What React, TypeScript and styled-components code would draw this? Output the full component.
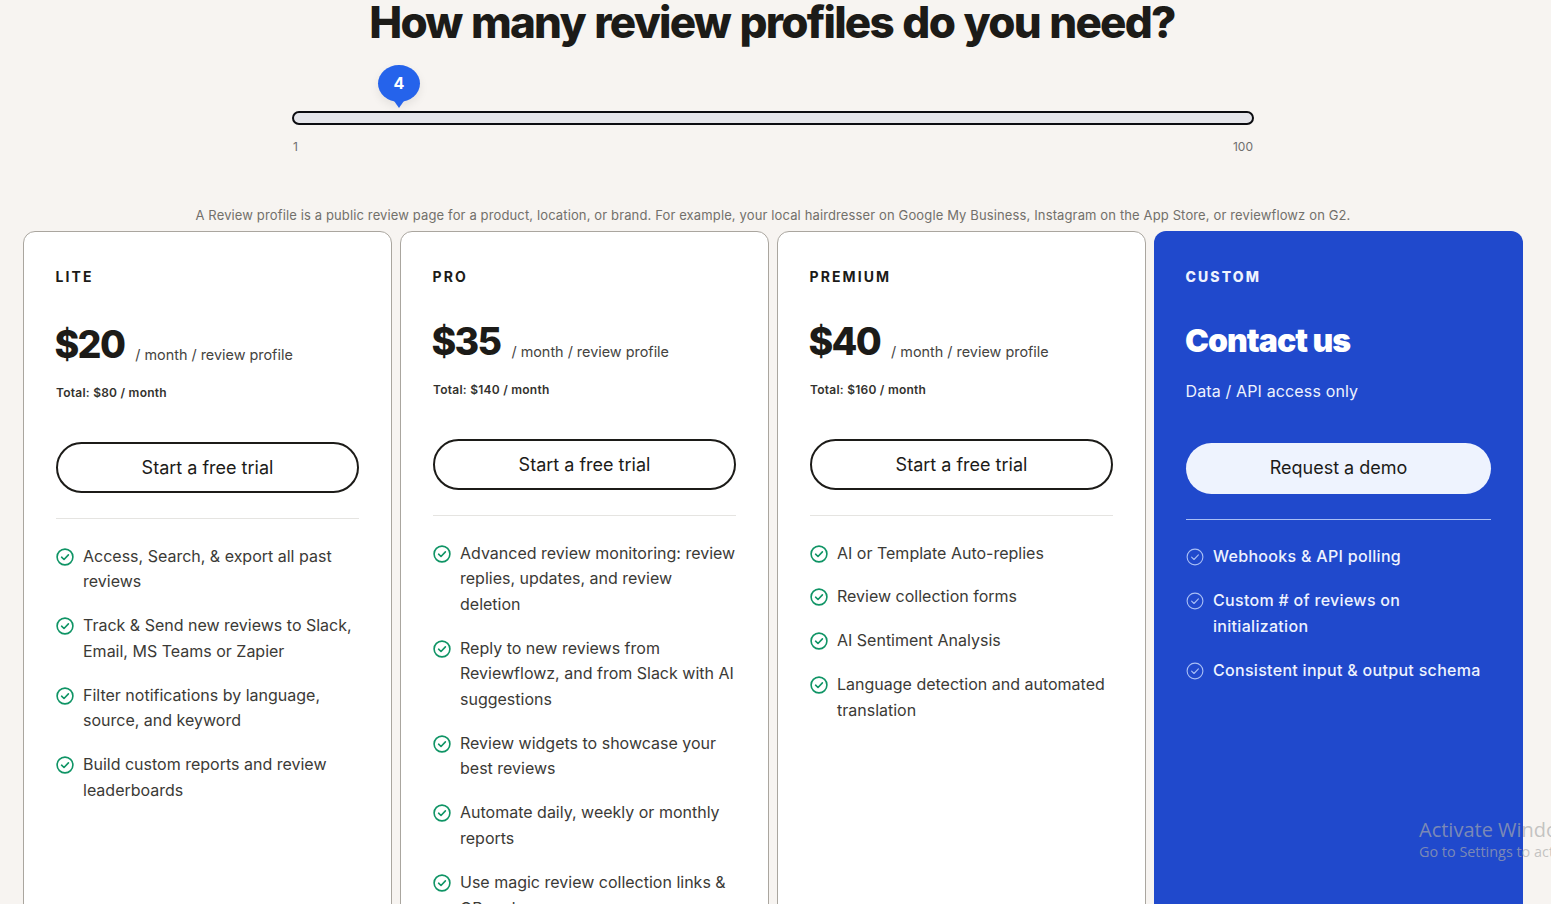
import styled, { createGlobalStyle } from "styled-components";

const GlobalStyle = createGlobalStyle`
  html, body {
    margin: 0;
    padding: 0;
    height: 904px;
    overflow: hidden;
    background: #f7f4f1;
    font-family: Inter, "Noto Sans", sans-serif;
    color: #1c1b18;
  }
`;

interface Plan {
  name: string;
  price: string;
  total: string;
  features: string[];
  shift: number;
}

const PLANS: Plan[] = [
  {
    name: "LITE",
    price: "$20",
    total: "Total: $80 / month",
    shift: 3,
    features: [
      "Access, Search, & export all past reviews",
      "Track & Send new reviews to Slack, Email, MS Teams or Zapier",
      "Filter notifications by language, source, and keyword",
      "Build custom reports and review leaderboards",
    ],
  },
  {
    name: "PRO",
    price: "$35",
    total: "Total: $140 / month",
    shift: 0,
    features: [
      "Advanced review monitoring: review replies, updates, and review deletion",
      "Reply to new reviews from Reviewflowz, and from Slack with AI suggestions",
      "Review widgets to showcase your best reviews",
      "Automate daily, weekly or monthly reports",
      "Use magic review collection links & QR codes",
    ],
  },
  {
    name: "PREMIUM",
    price: "$40",
    total: "Total: $160 / month",
    shift: 0,
    features: [
      "AI or Template Auto-replies",
      "Review collection forms",
      "AI Sentiment Analysis",
      "Language detection and automated translation",
    ],
  },
];

const CUSTOM_FEATURES = [
  "Webhooks & API polling",
  "Custom # of reviews on initialization",
  "Consistent input & output schema",
];

function CheckIcon({ color, weight }: { color: string; weight: number }) {
  return (
    <svg width="18" height="18" viewBox="0 0 18 18" fill="none">
      <circle cx="9" cy="9" r="7.9" stroke={color} strokeWidth={weight} />
      <path
        d="M5.6 9.2 8 11.5l4.4-4.6"
        stroke={color}
        strokeWidth={weight}
        strokeLinecap="round"
        strokeLinejoin="round"
      />
    </svg>
  );
}

export default function App() {
  return (
    <Page>
      <GlobalStyle />
      <Heading>How many review profiles do you need?</Heading>

      <SliderBlock>
        <Bubble>4</Bubble>
        <Track />
        <Scale>
          <span>1</span>
          <span>100</span>
        </Scale>
      </SliderBlock>

      <Note>
        A Review profile is a public review page for a product, location, or brand. For example,
        your local hairdresser on Google My Business, Instagram on the App Store, or reviewflowz on
        G2.
      </Note>

      <Cards>
        {PLANS.map((plan) => (
          <Card key={plan.name}>
            <PlanName>{plan.name}</PlanName>
            <PriceRow $shift={plan.shift}>
              <Price>{plan.price}</Price>
              <Per>/ month / review profile</Per>
            </PriceRow>
            <Total>{plan.total}</Total>
            <TrialButton>Start a free trial</TrialButton>
            <Divider />
            <Features>
              {plan.features.map((feature) => (
                <Feature key={feature}>
                  <IconSlot>
                    <CheckIcon color="#0f9465" weight={1.6} />
                  </IconSlot>
                  {feature}
                </Feature>
              ))}
            </Features>
          </Card>
        ))}

        <CustomCard>
          <CustomName>CUSTOM</CustomName>
          <Contact>Contact us</Contact>
          <CustomSub>Data / API access only</CustomSub>
          <DemoButton>Request a demo</DemoButton>
          <CustomDivider />
          <CustomFeatures>
            {CUSTOM_FEATURES.map((feature) => (
              <CustomFeature key={feature}>
                <IconSlot>
                  <CheckIcon color="#a9bff5" weight={1.1} />
                </IconSlot>
                {feature}
              </CustomFeature>
            ))}
          </CustomFeatures>
        </CustomCard>
      </Cards>

      <Watermark>
        <WatermarkTitle>Activate Windows</WatermarkTitle>
        <WatermarkSub>Go to Settings to activate Windows.</WatermarkSub>
      </Watermark>
    </Page>
  );
}

// Styled Components

const Page = styled.div`
  position: relative;
  width: 1551px;
  height: 904px;
  overflow: hidden;
`;

const Heading = styled.h1`
  margin: -5px 0 0;
  padding-right: 7px;
  height: 54px;
  font-size: 44px;
  line-height: 54px;
  font-weight: 800;
  letter-spacing: -0.04em;
  word-spacing: 1.5px;
  text-align: center;
  white-space: nowrap;
`;

const SliderBlock = styled.div`
  position: relative;
  width: 962px;
  margin: 0 0 0 292px;
  padding-top: 62px;
`;

const Bubble = styled.div`
  position: absolute;
  left: 86px;
  top: 16px;
  width: 42px;
  height: 37px;
  border-radius: 50%;
  background: #2563eb;
  box-shadow: 0 4px 10px rgba(0, 0, 0, 0.08);
  color: #fff;
  font-size: 16px;
  font-weight: 700;
  line-height: 36px;
  text-align: center;

  &::after {
    content: "";
    position: absolute;
    left: 14px;
    top: 33px;
    border-left: 7px solid transparent;
    border-right: 7px solid transparent;
    border-top: 10px solid #2563eb;
  }
`;

const Track = styled.div`
  box-sizing: border-box;
  height: 14px;
  border: 2.5px solid #0c0c10;
  border-radius: 7px;
  background: #e5e5ea;
`;

const Scale = styled.div`
  display: flex;
  justify-content: space-between;
  margin-top: 14px;
  padding: 0 1px;
  font-size: 12px;
  line-height: 15px;
  color: #6f6f6f;
`;

const Note = styled.p`
  margin: 53px 0 0;
  height: 17px;
  font-size: 13px;
  line-height: 17px;
  letter-spacing: 0.13px;
  color: #72706b;
  text-align: center;
  white-space: nowrap;
  padding-right: 5px;
`;

const Cards = styled.div`
  display: grid;
  grid-template-columns: repeat(4, 369px);
  gap: 8px;
  margin: 7px 0 0 23px;
  height: 720px;
`;

const Card = styled.section`
  box-sizing: border-box;
  padding: 36px 32px 0;
  background: #fff;
  border: 1px solid #aaa69f;
  border-radius: 12px;
`;

const PlanName = styled.div`
  margin-left: -0.5px;
  font-size: 14px;
  line-height: 17px;
  font-weight: 700;
  letter-spacing: 0.15em;
`;

const PriceRow = styled.div<{ $shift: number }>`
  display: flex;
  align-items: flex-end;
  gap: 11px;
  margin-top: ${({ $shift }) => 33 + $shift}px;
`;

const Price = styled.div`
  margin-left: -1.5px;
  font-size: 37.6px;
  line-height: 48px;
  font-weight: 800;
  letter-spacing: -0.045em;
`;

const Per = styled.div`
  margin-bottom: 4px;
  font-size: 14.4px;
  line-height: 20px;
  color: #45443f;
`;

const Total = styled.div`
  margin-top: 16px;
  font-size: 12px;
  line-height: 15px;
  font-weight: 600;
  letter-spacing: 0.02em;
  color: #33322e;
`;

const TrialButton = styled.button`
  box-sizing: border-box;
  display: block;
  width: 303px;
  height: 51px;
  margin-top: 42px;
  border: 2px solid #1c1b18;
  border-radius: 26px;
  background: #fff;
  color: #1c1b18;
  font-family: inherit;
  font-size: 18px;
`;

const Divider = styled.div`
  width: 303px;
  height: 1px;
  margin-top: 25px;
  background: #e5e4e1;
`;

const Features = styled.ul`
  display: flex;
  flex-direction: column;
  gap: 18.4px;
  margin: 24.5px 0 0;
  padding: 0;
  list-style: none;
`;

const CustomFeatures = styled(Features)`
  margin-top: 24px;
`;

const Feature = styled.li`
  position: relative;
  padding-left: 27px;
  font-size: 16px;
  line-height: 25.6px;
  color: #3b3a36;
`;

const IconSlot = styled.span`
  position: absolute;
  left: 0;
  top: 4px;
  width: 18px;
  height: 18px;
`;

const CustomCard = styled.section`
  box-sizing: border-box;
  padding: 37px 32px 0;
  background: #2049cc;
  border-radius: 12px;
  color: #eef3fe;
`;

const CustomName = styled(PlanName)`
  font-weight: 800;
  color: #eef3fe;
`;

const Contact = styled.div`
  margin-top: 32px;
  margin-left: -1px;
  font-size: 32px;
  line-height: 48px;
  font-weight: 900;
  letter-spacing: -0.03em;
  color: #fff;
`;

const CustomSub = styled.div`
  margin-top: 14px;
  margin-left: -0.5px;
  font-size: 16px;
  line-height: 25px;
  letter-spacing: 0.14px;
`;

const DemoButton = styled.button`
  display: block;
  width: 305px;
  height: 51px;
  margin-top: 39px;
  padding-bottom: 3px;
  border: 0;
  border-radius: 26px;
  background: #eef3fe;
  color: #1c1b18;
  font-family: inherit;
  font-size: 18px;
`;

const CustomDivider = styled.div`
  width: 305px;
  height: 1px;
  margin-top: 25px;
  background: #a9bff5;
`;

const CustomFeature = styled(Feature)`
  font-weight: 500;
  letter-spacing: 0.3px;
  color: #eef3fe;
`;

const Watermark = styled.div`
  position: absolute;
  left: 1419px;
  top: 816.5px;
  width: 300px;
  color: rgba(170, 170, 170, 0.68);
  font-family: "Open Sans", sans-serif;
  pointer-events: none;
`;

const WatermarkTitle = styled.div`
  font-size: 20px;
  line-height: 25px;
`;

const WatermarkSub = styled.div`
  font-size: 14.4px;
  line-height: 20px;
`;
